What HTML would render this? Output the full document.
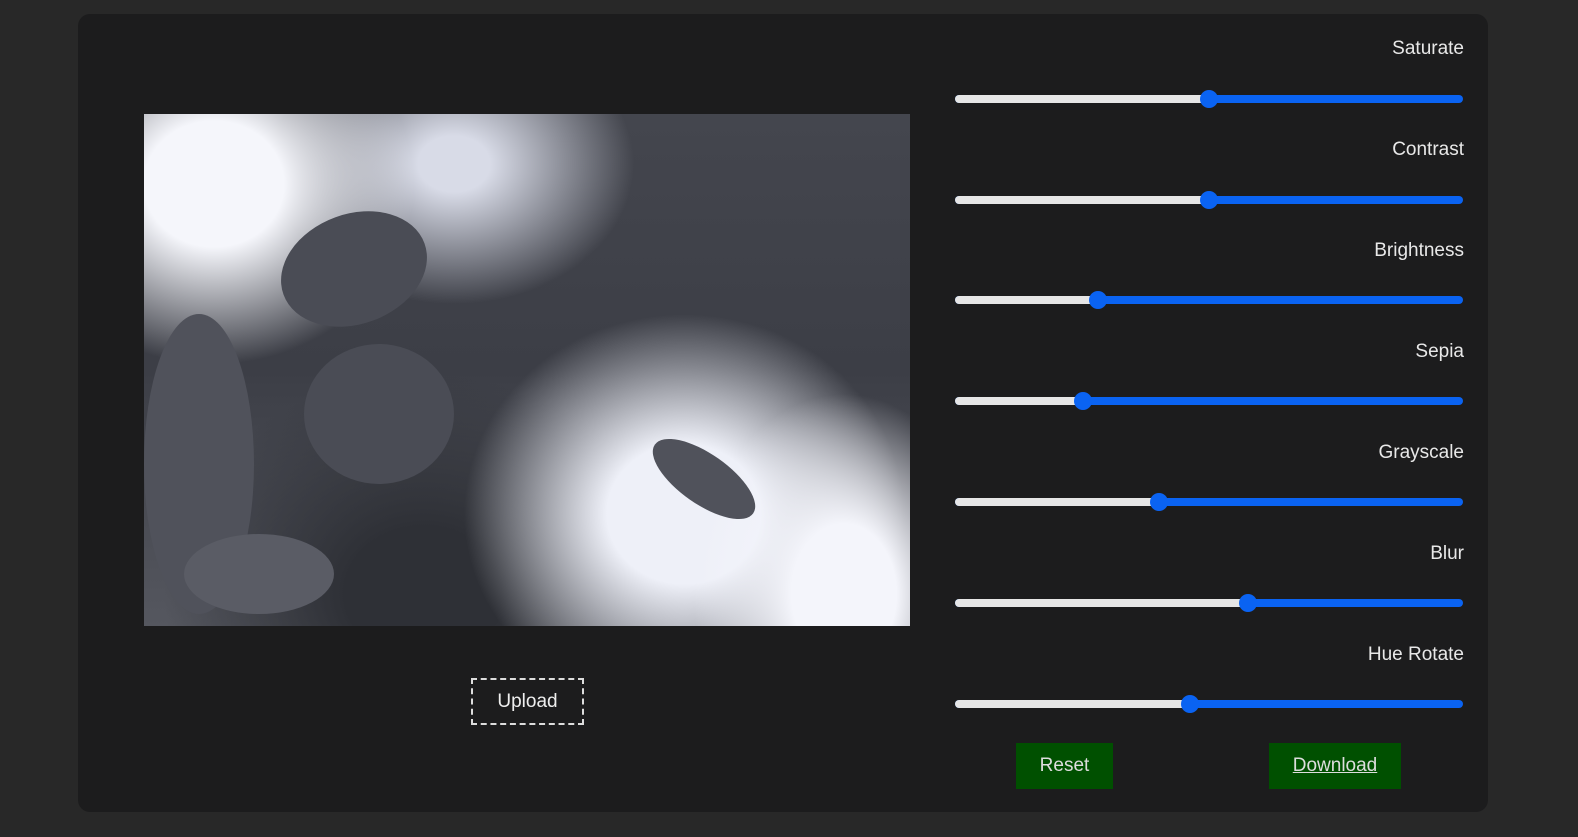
<!DOCTYPE html>
<html><head><style>
body{margin:0;width:1578px;height:837px;background:#282828;position:relative;overflow:hidden;font-family:"Liberation Sans",sans-serif}
.panel{position:absolute;left:78px;top:14px;width:1410px;height:798px;background:#1c1c1d;border-radius:12px}
.img{position:absolute;left:144px;top:114px;width:766px;height:512px;overflow:hidden;
background:
radial-gradient(ellipse 150px 200px at 700px 480px,#f4f5fb 35%,rgba(240,242,250,0) 100%),
radial-gradient(ellipse 220px 200px at 540px 400px,#eef0f8 35%,rgba(230,232,245,0) 100%),
radial-gradient(ellipse 200px 180px at 70px 70px,#f5f6fb 35%,rgba(240,242,250,0) 100%),
radial-gradient(ellipse 180px 140px at 310px 50px,#d8dbe7 20%,rgba(220,222,235,0) 100%),
radial-gradient(ellipse 260px 220px at 280px 480px,#2e3036 30%,rgba(50,52,60,0) 100%),
linear-gradient(180deg,#44464e,#3c3e46 50%,#55575f);}
.blob{position:absolute;border-radius:50%;background:#4a4c55}
.lbl{position:absolute;right:114px;color:#e8e8e8;font-size:19px}
.track{position:absolute;left:955px;width:508px;height:8px;border-radius:4px;background:#0a63f2}
.track .l{position:absolute;left:0;top:0;height:8px;border-radius:4px;background:#e6e6e6}
.track .t{position:absolute;top:-5px;width:18px;height:18px;border-radius:50%;background:#0a63f2;margin-left:-9px}
.btn{position:absolute;background:#005000;color:#ddd;font-size:19px;text-align:center;line-height:46px;height:46px}
</style></head><body>
<div class="panel"></div>
<div class="img">
<div class="blob" style="left:135px;top:100px;width:150px;height:110px;transform:rotate(-20deg)"></div>
<div class="blob" style="left:160px;top:230px;width:150px;height:140px"></div>
<div class="blob" style="left:0;top:200px;width:110px;height:300px;background:#50525b"></div>
<div class="blob" style="left:40px;top:420px;width:150px;height:80px;background:#5a5c65"></div>
<div class="blob" style="left:500px;top:340px;width:120px;height:50px;background:#50525b;transform:rotate(35deg)"></div>
</div>
<div style="position:absolute;left:471px;top:678px;width:109px;height:43px;border:2px dashed #ddd;color:#eee;font-size:19px;text-align:center;line-height:43px">Upload</div>

<div class="lbl" style="top:38px">Saturate</div>
<div class="track" style="top:95px"><div class="l" style="width:254px"></div><div class="t" style="left:254px"></div></div>
<div class="lbl" style="top:139px">Contrast</div>
<div class="track" style="top:196px"><div class="l" style="width:254px"></div><div class="t" style="left:254px"></div></div>
<div class="lbl" style="top:240px">Brightness</div>
<div class="track" style="top:296px"><div class="l" style="width:143px"></div><div class="t" style="left:143px"></div></div>
<div class="lbl" style="top:341px">Sepia</div>
<div class="track" style="top:397px"><div class="l" style="width:128px"></div><div class="t" style="left:128px"></div></div>
<div class="lbl" style="top:442px">Grayscale</div>
<div class="track" style="top:498px"><div class="l" style="width:204px"></div><div class="t" style="left:204px"></div></div>
<div class="lbl" style="top:543px">Blur</div>
<div class="track" style="top:599px"><div class="l" style="width:293px"></div><div class="t" style="left:293px"></div></div>
<div class="lbl" style="top:644px">Hue Rotate</div>
<div class="track" style="top:700px"><div class="l" style="width:235px"></div><div class="t" style="left:235px"></div></div>

<div class="btn" style="left:1016px;top:743px;width:97px">Reset</div>
<div class="btn" style="left:1269px;top:743px;width:132px;text-decoration:underline">Download</div>
</body></html>
